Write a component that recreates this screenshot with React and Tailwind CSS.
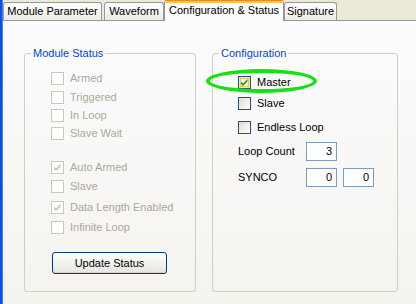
import React from "react";

const statusRows = [
  { label: "Armed", checked: false, mt: "mt-0" },
  { label: "Triggered", checked: false, mt: "mt-[6px]" },
  { label: "In Loop", checked: false, mt: "mt-[5px]" },
  { label: "Slave Wait", checked: false, mt: "mt-[5px]" },
  { label: "Auto Armed", checked: true, mt: "mt-[21px]" },
  { label: "Slave", checked: false, mt: "mt-[6px]" },
  { label: "Data Length Enabled", checked: true, mt: "mt-[8px]" },
  { label: "Infinite Loop", checked: false, mt: "mt-[7px]" },
];

function Check({ color }) {
  return (
    <svg width="13" height="13" viewBox="0 0 13 13" className="absolute -left-px -top-px">
      <polygon points="3,5.5 5,7.5 9.5,3 9.5,5.5 5,10 3,8" fill={color} />
    </svg>
  );
}

function CheckBox({ label, checked, disabled, hot }) {
  let box = "border-[#1c5180] bg-linear-to-br from-[#dcdcd7] to-white";
  if (disabled) box = "border-[#cac8bb] bg-white";
  if (hot) box = "border-[#1c5180] bg-[#f4f3ee] shadow-[inset_0_0_0_1px_#fde6ad,inset_0_0_0_2px_#f6c15c]";
  return (
    <div className="flex items-center gap-[6px] h-[13px]">
      <div className={`relative w-[13px] h-[13px] shrink-0 border ${box}`}>
        {checked && <Check color={disabled ? "#c4c2b6" : "#21a121"} />}
      </div>
      <span className={`text-[11px] leading-[13px] ${disabled ? "text-[#aca899]" : "text-black"}`}>{label}</span>
    </div>
  );
}

function Field({ value }) {
  return (
    <div className="w-[31px] h-[19px] border border-[#7f9db9] bg-white text-[11px] leading-[17px] text-right pr-[4px] text-black">
      {value}
    </div>
  );
}

function Tab({ label, w }) {
  return (
    <div className={`${w} h-[18px] border border-b-0 border-[#919b9c] rounded-t-[3px] bg-linear-to-b from-white to-[#ecebe4] flex items-center justify-center text-[11px] leading-[13px] text-black`}>
      {label}
    </div>
  );
}

function GroupBox({ title, w, pad, children }) {
  return (
    <div className={`relative ${w} h-[239px] border border-[#d0d0bf] rounded-[3px] ${pad}`}>
      <span className="absolute -top-[7px] left-[6px] px-[2px] bg-[#fbfbfb] text-[11px] leading-[13px] text-[#0046d5]">{title}</span>
      {children}
    </div>
  );
}

export default function App() {
  return (
    <div className="relative w-[416px] h-[304px] flex overflow-hidden bg-[#ece9d8] font-['Liberation_Sans',Arial,sans-serif]">
      <div className="w-[3px] shrink-0 bg-[#0b4fe0] border-r border-[#3f88f5]" />
      <div className="flex-1 flex flex-col">
        <div className="h-[21px] shrink-0 flex items-end border-b border-[#919b9c]">
          <Tab label="Module Parameter" w="w-[99px]" />
          <div className="w-[2px]" />
          <Tab label="Waveform" w="w-[60px]" />
          <div className="relative w-[120px] h-[21px] -mb-px border-x border-[#919b9c] bg-[#fcfcfe] rounded-t-[3px] overflow-hidden flex flex-col">
            <div className="h-[3px] shrink-0 bg-[#fbc445] border-t border-[#e68b2c]" />
            <div className="text-center text-[11px] leading-[13px] text-black mt-[1px]">Configuration &amp; Status</div>
          </div>
          <Tab label="Signature" w="w-[53px]" />
        </div>

        <div className="flex-1 bg-linear-to-b from-[#fcfcfe] to-[#f4f3ee] flex items-start pl-[21px] pt-[32px] gap-[16px]">
          <GroupBox title="Module Status" w="w-[172px]" pad="pl-[26px] pt-[18px]">
            {statusRows.map((r) => (
              <div key={r.label} className={r.mt}>
                <CheckBox label={r.label} checked={r.checked} disabled />
              </div>
            ))}
            <button className="block mt-[18px] ml-px w-[115px] h-[22px] border border-[#003c74] rounded-[3px] bg-linear-to-b from-white to-[#e6e5de] shadow-[inset_0_-1px_0_#d6d0c5] text-[11px] leading-[13px] text-black">
              Update Status
            </button>
          </GroupBox>

          <GroupBox title="Configuration" w="w-[186px]" pad="pl-[25px] pt-[22px]">
            <CheckBox label="Master" checked hot />
            <div className="mt-[8px]">
              <CheckBox label="Slave" />
            </div>
            <div className="mt-[11px]">
              <CheckBox label="Endless Loop" />
            </div>
            <div className="mt-[8px] flex items-center">
              <span className="w-[68px] text-[11px] leading-[13px] text-black">Loop Count</span>
              <Field value="3" />
            </div>
            <div className="mt-[7px] flex items-center">
              <span className="w-[68px] text-[11px] leading-[13px] text-black">SYNCO</span>
              <Field value="0" />
              <div className="w-[6px]" />
              <Field value="0" />
            </div>
          </GroupBox>
        </div>
      </div>

      <div className="pointer-events-none absolute left-[206px] top-[69px] w-[111px] h-[24px] rounded-[50%] border-[4px] border-[#14e214]" />
    </div>
  );
}
